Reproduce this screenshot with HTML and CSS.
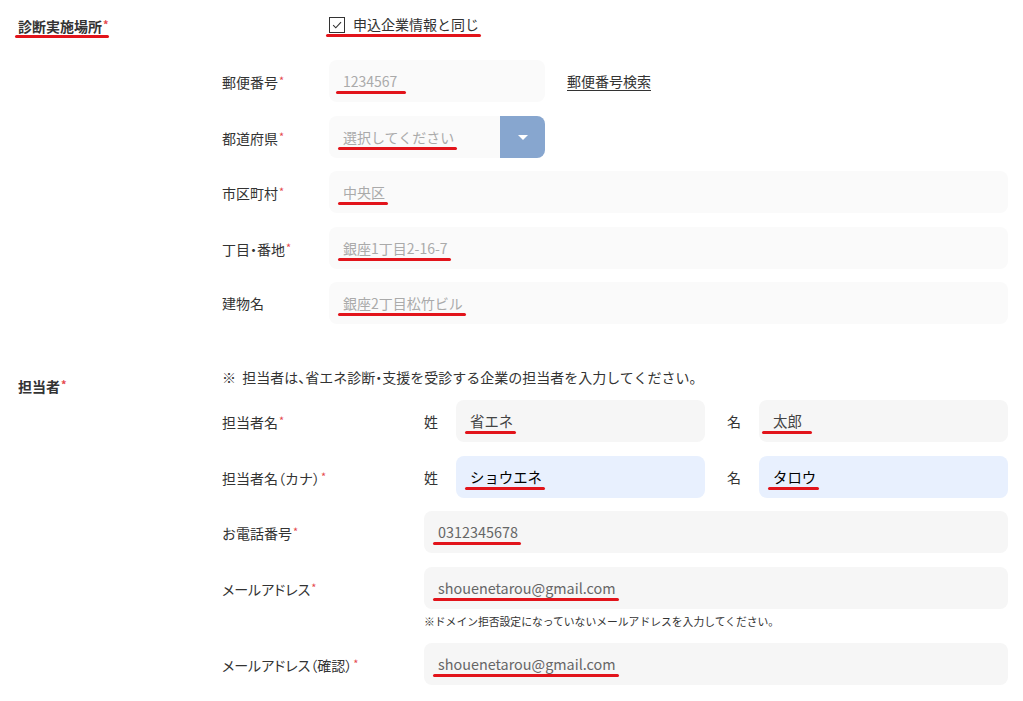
FILE: index.html
```html
<!DOCTYPE html>
<html lang="ja">
<head>
<meta charset="utf-8">
<title>診断実施場所・担当者</title>
<link rel="stylesheet" href="styles.css">
</head>
<body>
<div class="form">
  <section class="sec sec--addr">
    <div class="sec-label"><span class="mark mark--label">診断実施場所<span class="req">*</span></span></div>
    <div class="sec-body">
      <div class="check-row">
        <span class="mark mark--check">
          <span class="checkbox"><svg viewBox="0 0 16 16" width="16" height="16"><path d="M3.6 8.2 L6.6 11.2 L12.6 4.6" fill="none" stroke="#333" stroke-width="1.3"/></svg></span>
          <span class="check-text">申込企業情報と同じ</span>
        </span>
      </div>
      <div class="row">
        <div class="row-label">郵便番号<span class="req">*</span></div>
        <div class="row-ctrl">
          <div class="field field--short field--light"><span class="ph mark mark--zip">1234567</span></div>
          <a class="link" href="#">郵便番号検索</a>
        </div>
      </div>
      <div class="row">
        <div class="row-label">都道府県<span class="req">*</span></div>
        <div class="row-ctrl">
          <div class="select">
            <div class="select-box"><span class="ph mark">選択してください</span></div>
            <div class="select-btn"><span class="tri"></span></div>
          </div>
        </div>
      </div>
      <div class="row">
        <div class="row-label">市区町村<span class="req">*</span></div>
        <div class="row-ctrl">
          <div class="field field--light"><span class="ph mark">中央区</span></div>
        </div>
      </div>
      <div class="row">
        <div class="row-label">丁目<span class="palt">・</span>番地<span class="req">*</span></div>
        <div class="row-ctrl">
          <div class="field field--light"><span class="ph mark">銀座1丁目2-16-7</span></div>
        </div>
      </div>
      <div class="row row--last">
        <div class="row-label">建物名</div>
        <div class="row-ctrl">
          <div class="field field--light"><span class="ph mark">銀座2丁目松竹ビル</span></div>
        </div>
      </div>
    </div>
  </section>

  <section class="sec sec--person">
    <div class="sec-label sec-label--person">担当者<span class="req">*</span></div>
    <div class="sec-body">
      <p class="note">※&nbsp; 担当者は<span class="palt">、</span>省エネ診断<span class="palt">・</span>支援を受診する企業の担当者を入力してください。</p>
      <div class="row row--wide">
        <div class="row-label">担当者名<span class="req">*</span></div>
        <div class="name-grid">
          <span class="name-label">姓</span>
          <div class="field"><span class="val val--dark mark">省エネ</span></div>
          <span class="name-label name-label--2">名</span>
          <div class="field"><span class="val val--dark mark mark--taro">太郎</span></div>
        </div>
      </div>
      <div class="row row--wide">
        <div class="row-label">担当者名<span class="palt">（</span>カナ<span class="palt">）</span><span class="req">*</span></div>
        <div class="name-grid">
          <span class="name-label">姓</span>
          <div class="field field--auto"><span class="val val--auto mark">ショウエネ</span></div>
          <span class="name-label name-label--2">名</span>
          <div class="field field--auto"><span class="val val--auto mark">タロウ</span></div>
        </div>
      </div>
      <div class="row row--wide">
        <div class="row-label">お電話番号<span class="req">*</span></div>
        <div class="field"><span class="val mark">0312345678</span></div>
      </div>
      <div class="row row--wide row--tight">
        <div class="row-label"><span class="palt">メールアドレス</span><span class="req">*</span></div>
        <div class="field"><span class="val mark">shouenetarou@gmail.com</span></div>
      </div>
      <p class="hint">※ドメイン拒否設定になっていないメールアドレスを入力してください。</p>
      <div class="row row--wide row--last">
        <div class="row-label"><span class="palt">メールアドレス（</span>確認<span class="palt">）</span><span class="req">*</span></div>
        <div class="field"><span class="val mark">shouenetarou@gmail.com</span></div>
      </div>
    </div>
  </section>
</div>
</body>
</html>
```

FILE: styles.css
```css
* { box-sizing: border-box; }

html, body {
  margin: 0;
  padding: 0;
  background: #fff;
}

body {
  font-family: "Noto Sans CJK JP", "Noto Sans", sans-serif;
  font-size: 14px;
  line-height: 20px;
  color: #333;
}

.form {
  padding: 14px 15px 0 18px;
  width: 1023px;
}

.sec {
  display: grid;
  grid-template-columns: 204px 1fr;
}

.sec--person {
  margin-top: 43px;
}

.sec-label {
  font-weight: 700;
  height: 20px;
}

.sec-label--person {
  padding-top: 7px;
  height: auto;
}

.req {
  color: #e5484d;
  font-size: 11px;
  font-weight: 400;
  vertical-align: 3px;
  margin-left: 1px;
}

.sec-label .req { font-weight: 700; }

.palt {
  font-feature-settings: "palt" 1;
}

/* annotation underline */
.mark {
  position: relative;
  display: inline-block;
}
.mark::after {
  content: "";
  position: absolute;
  left: -5px;
  right: -3px;
  bottom: -3px;
  height: 3px;
  border-radius: 2px;
  background: #e2141b;
}
.mark--label::after { left: -3px; right: 0; bottom: -2px; }
.mark--check::after { left: -3px; right: -2px; bottom: -3px; }
.mark--zip::after { left: -7px; right: -9px; }
.mark--taro::after { left: -11px; right: -10px; }

.check-row {
  height: 20px;
  padding-left: 107px;
  margin-bottom: 26px;
}

.mark--check {
  display: inline-flex;
  align-items: center;
  height: 20px;
}

.checkbox {
  width: 16px;
  height: 16px;
  border: 1.3px solid #333;
  display: inline-flex;
  align-items: center;
  justify-content: center;
  margin-top: 2px;
  margin-right: 8px;
  background: #fff;
}
.checkbox svg { display: block; width: 14px; height: 14px; }

.check-text { color: #333; }

.row {
  display: grid;
  grid-template-columns: 107px 1fr;
  align-items: center;
  height: 42px;
  margin-bottom: 13.5px;
}
.row--wide {
  grid-template-columns: 202px 1fr;
}
.row--last { margin-bottom: 0; }
.row--tight { margin-bottom: 0; }

.row-label {
  color: #333;
  white-space: nowrap;
}

.row-ctrl {
  display: flex;
  align-items: center;
  height: 42px;
}

.field {
  height: 42px;
  border-radius: 8px;
  background: #f6f6f6;
  display: flex;
  align-items: center;
  padding-left: 14px;
  flex: 1;
  min-width: 0;
}
.field--light { background: #fafafa; }
.field--short { flex: 0 0 216px; }
.field--auto { background: #e8f0fe; }

.ph { color: #aaa; }
.val { color: #666; font-size: 14.4px; }
.val--dark { color: #444; }
.val--auto { color: #000; }

.link {
  margin-left: 22px;
  color: #333;
  text-decoration: underline;
  text-underline-offset: 3px;
}

.select {
  width: 216px;
  height: 42px;
  display: flex;
}
.select-box {
  flex: 1;
  background: #fafafa;
  border-radius: 8px 0 0 8px;
  display: flex;
  align-items: center;
  padding-left: 14px;
}
.select-btn {
  width: 45px;
  background: #87a6cf;
  border-radius: 0 8px 8px 0;
  display: flex;
  align-items: center;
  justify-content: center;
}
.tri {
  width: 0;
  height: 0;
  border-left: 5px solid transparent;
  border-right: 5px solid transparent;
  border-top: 5px solid #fff;
  margin-top: 1px;
}

.note {
  margin: 0 0 13px;
  height: 20px;
  color: #333;
  white-space: nowrap;
}

.name-grid {
  display: grid;
  grid-template-columns: 32px 1fr 54px 1fr;
  align-items: center;
  height: 42px;
}
.name-label {
  color: #333;
}
.name-label--2 {
  padding-left: 22px;
}

.hint {
  margin: 4.5px 0 14px 202px;
  font-size: 10.8px;
  line-height: 16px;
  color: #333;
  white-space: nowrap;
}
```
